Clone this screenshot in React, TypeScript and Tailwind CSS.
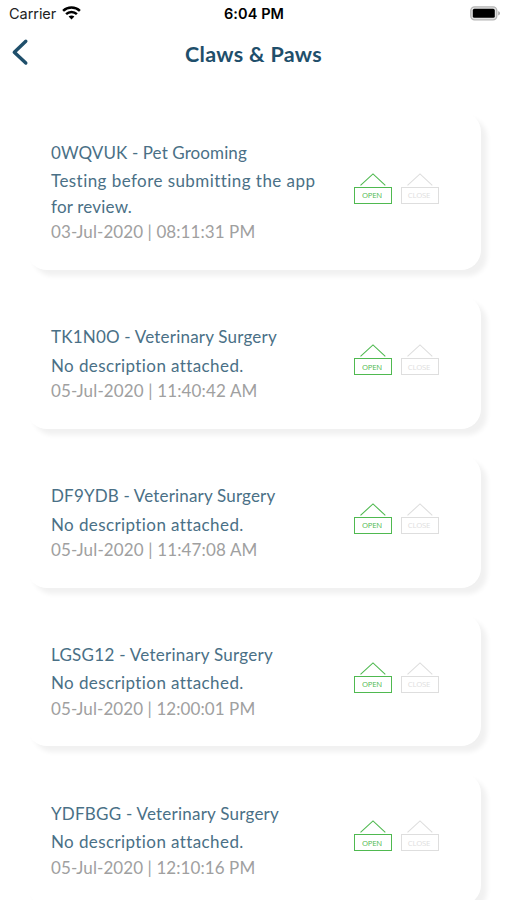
type Booking = {
  title: string;
  titleClass: string;
  lines: { text: string; className: string }[];
  date: string;
  dateClass: string;
};

const NO_DESCRIPTION = [{ text: "No description attached.", className: "tracking-[0.4px]" }];

const bookings: Booking[] = [
  {
    title: "0WQVUK - Pet Grooming",
    titleClass: "tracking-[0.1px]",
    lines: [
      { text: "Testing before submitting the app", className: "tracking-[0.44px]" },
      { text: "for review.", className: "tracking-[0.2px]" },
    ],
    date: "03-Jul-2020 | 08:11:31 PM",
    dateClass: "tracking-[0.08px]",
  },
  {
    title: "TK1N0O - Veterinary Surgery",
    titleClass: "tracking-[0.2px]",
    lines: NO_DESCRIPTION,
    date: "05-Jul-2020 | 11:40:42 AM",
    dateClass: "tracking-[0.14px]",
  },
  {
    title: "DF9YDB - Veterinary Surgery",
    titleClass: "tracking-[0.17px]",
    lines: NO_DESCRIPTION,
    date: "05-Jul-2020 | 11:47:08 AM",
    dateClass: "tracking-[0.14px]",
  },
  {
    title: "LGSG12 - Veterinary Surgery",
    titleClass: "tracking-[0.27px]",
    lines: NO_DESCRIPTION,
    date: "05-Jul-2020 | 12:00:01 PM",
    dateClass: "tracking-[0.08px]",
  },
  {
    title: "YDFBGG - Veterinary Surgery",
    titleClass: "tracking-[0.23px]",
    lines: NO_DESCRIPTION,
    date: "05-Jul-2020 | 12:10:16 PM",
    dateClass: "tracking-[0.08px]",
  },
];

function Sign({ label, className }: { label: string; className: string }) {
  return (
    <div className={`flex w-[38px] flex-col items-center ${className}`}>
      <svg className="h-[14px] w-[38px]" viewBox="0 0 38 14" fill="none" stroke="currentColor" strokeWidth="1.1">
        <path d="M6.5 12.4 19 .9l12.3 11.5" />
      </svg>
      <div className="flex h-[17px] w-[38px] items-center justify-center border border-current pt-[2px] pr-[2px] text-[7.8px] leading-none tracking-[-0.25px] font-['Open_Sans',sans-serif]">
        {label}
      </div>
    </div>
  );
}

function BookingCard({ booking }: { booking: Booking }) {
  return (
    <article className="flex items-center justify-between rounded-[20px] bg-white pt-[28.2px] pr-[42px] pb-[25px] pl-[24px] shadow-[6px_6px_5px_rgba(0,0,0,0.06)]">
      <div className="text-[17px] leading-[25.5px] whitespace-nowrap text-[#4a7086]">
        <h2 className={`mb-[2.8px] ${booking.titleClass}`}>
          <span>{booking.title}</span>
        </h2>
        {booking.lines.map((line) => (
          <p key={line.text} className={line.className}>
            {line.text}
          </p>
        ))}
        <p className={`text-[#a0a0a0] ${booking.dateClass}`}>{booking.date}</p>
      </div>
      <div className="mb-[9px] flex gap-[9px]">
        <Sign label="OPEN" className="text-[#4fb950]" />
        <Sign label="CLOSE" className="text-[#dedede]" />
      </div>
    </article>
  );
}

export default function App() {
  return (
    <div className="h-[900px] w-[507px] overflow-hidden bg-white font-['Lato',sans-serif]">
      <div className="grid h-[27px] grid-cols-3 items-center pt-px pr-[6px] pl-[9px] font-['Inter',sans-serif] text-[14.5px] leading-none text-[#222]">
        <div className="flex items-center gap-[5.5px]">
          <span className="tracking-[-0.05px]">Carrier</span>
          <svg className="mb-[2px] h-[14px] w-[19px]" viewBox="0 0 19 14" fill="none" stroke="#000" strokeWidth="2.5">
            <path d="M1.1 4.9C5.7.5 13.3.5 17.9 4.9" />
            <path d="M4.1 8.1C7.1 5.2 11.9 5.2 14.9 8.1" />
            <path d="M9.5 13.5 6.6 10.6C8.3 9.2 10.7 9.2 12.4 10.6Z" fill="#000" stroke="none" />
          </svg>
        </div>
        <span className="pr-[2px] text-center font-semibold tracking-[0.1px] text-black">6:04 PM</span>
        <svg className="mb-px h-[15px] w-[31px] justify-self-end" viewBox="0 0 31 15">
          <rect x="0.8" y="0.8" width="26" height="13" rx="3.8" fill="#e2e2e2" stroke="#b5b5b5" strokeWidth="1.3" />
          <rect x="2.8" y="2.8" width="22" height="9" rx="1.6" fill="#000" />
          <path d="M28.2 5.2C30.6 5.8 30.6 8.8 28.2 9.4Z" fill="#aaa" />
        </svg>
      </div>
      <header className="grid h-[59px] grid-cols-[60px_1fr_60px] items-center">
        <svg className="mb-[9px] ml-[11px] h-[28px] w-[18px]" viewBox="0 0 18 28" fill="none" stroke="#1f4f6b" strokeWidth="3.4" strokeLinecap="round" strokeLinejoin="round">
          <path d="M14.8 3.2 3.3 14.2 14.8 25" />
        </svg>
        <h1 className="mb-[4px] text-center text-[21.5px] font-bold tracking-[0.3px] text-[#1f4f6b]">
          <span>Claws &amp; Paws</span>
        </h1>
      </header>
      <main className="flex flex-col gap-[26.3px] pt-[26px] pr-[26px] pl-[27px]">
        {bookings.map((booking) => (
          <BookingCard key={booking.title} booking={booking} />
        ))}
      </main>
    </div>
  );
}
